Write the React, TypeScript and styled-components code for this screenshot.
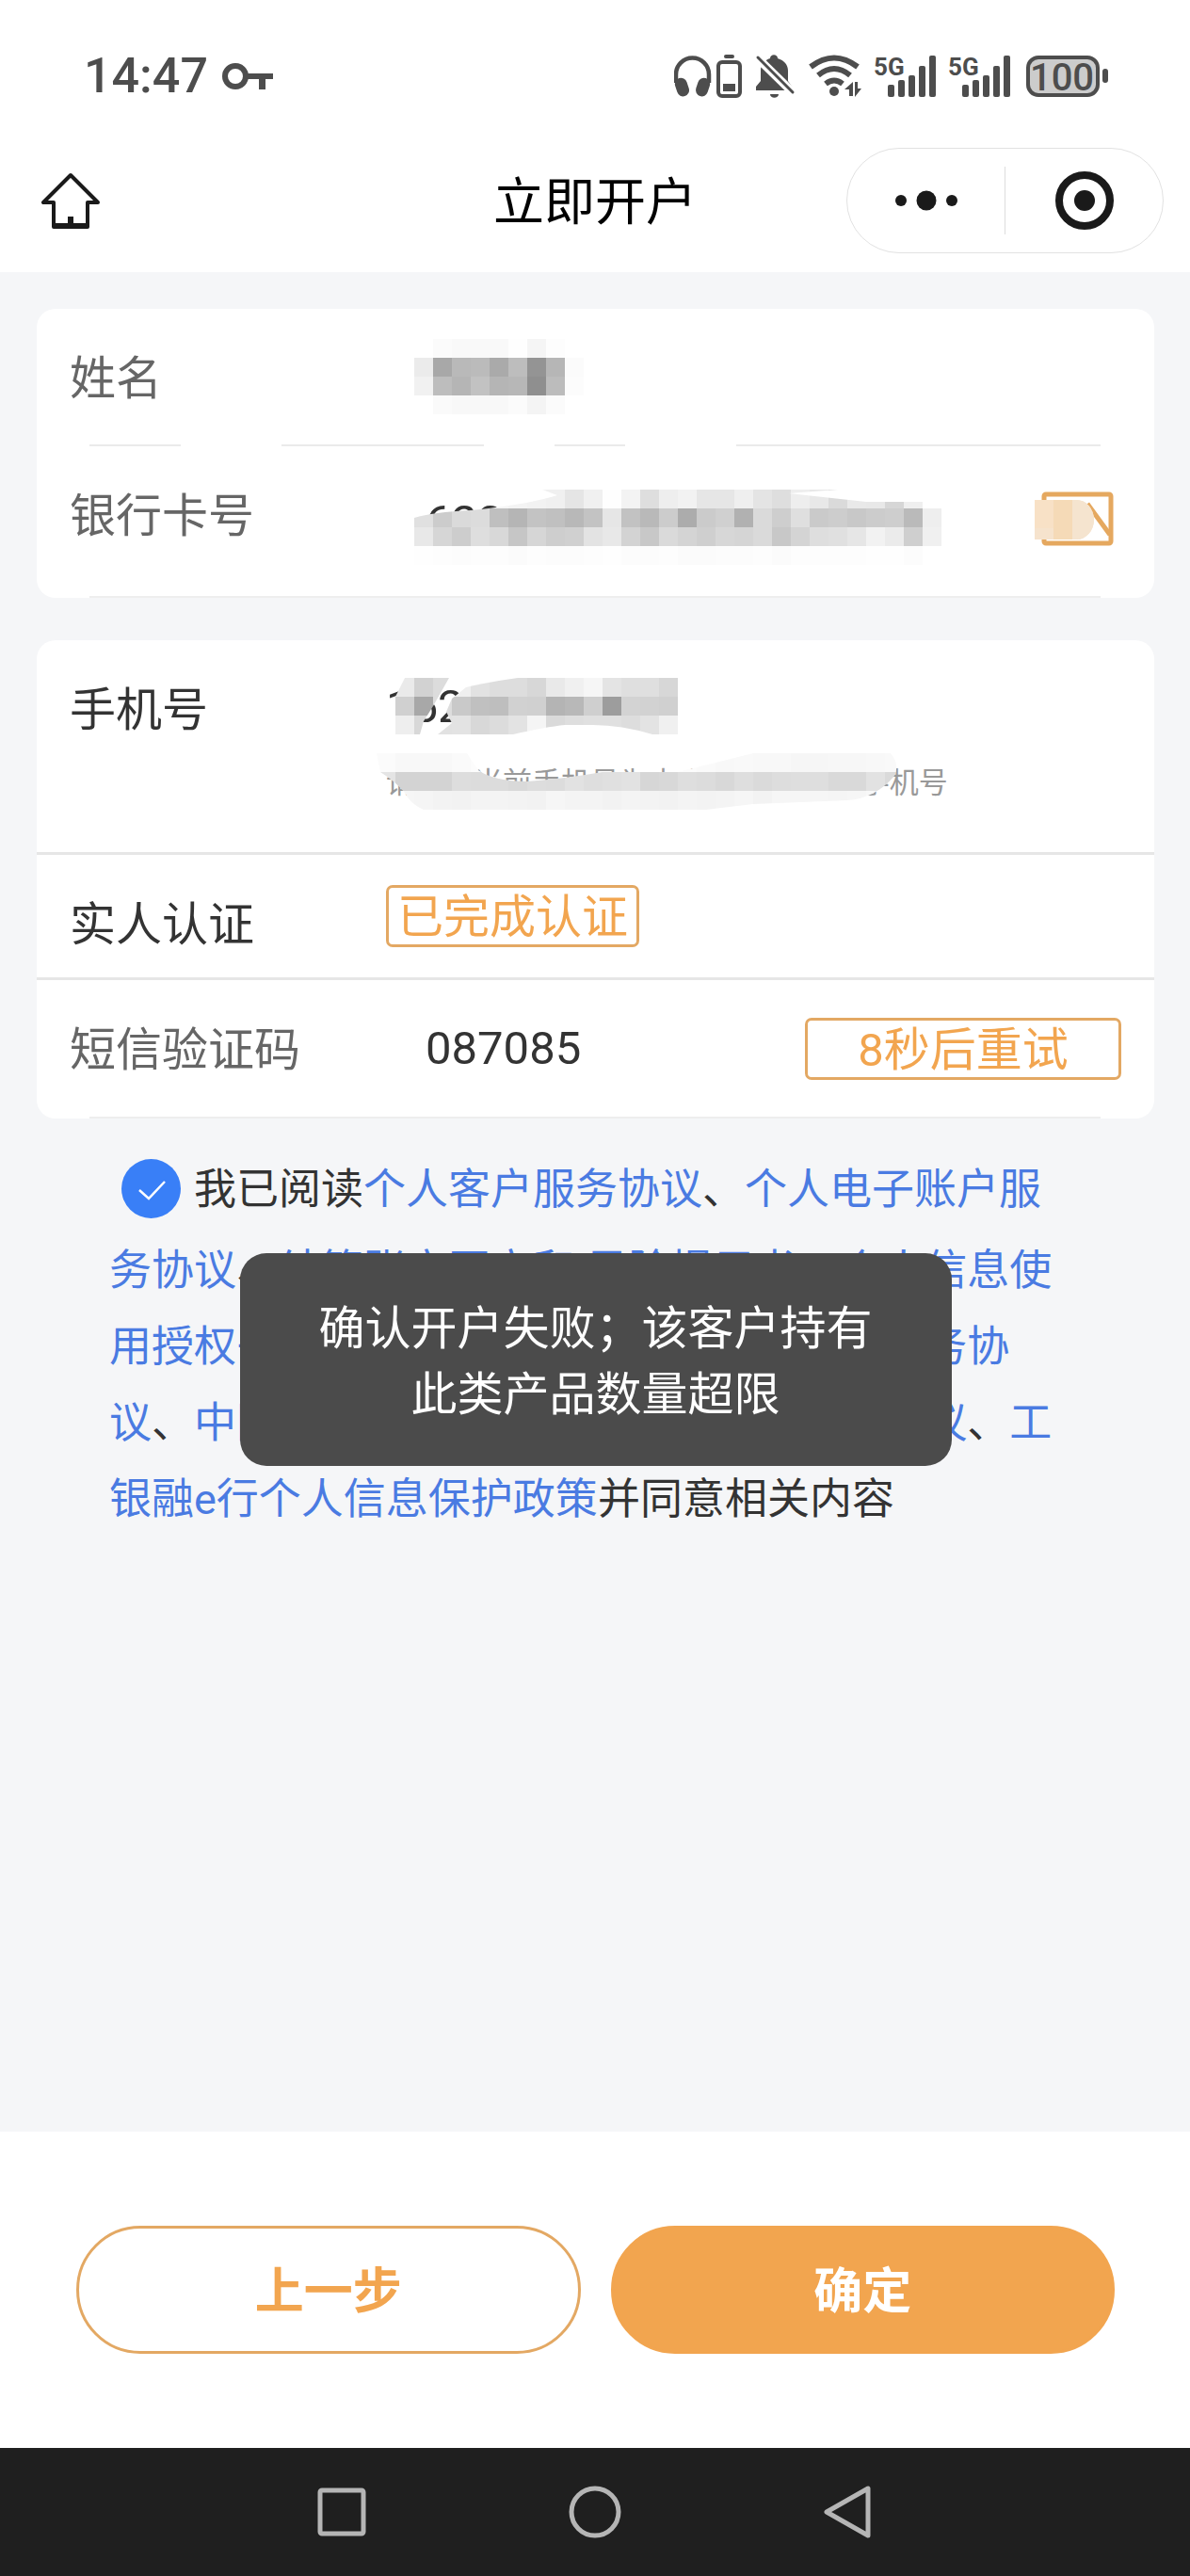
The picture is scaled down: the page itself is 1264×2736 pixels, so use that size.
import React, { useId } from "react";
import styled, { createGlobalStyle, css } from "styled-components";

const orange = "#f2a54f";
const ink = "#333333";
const statusInk = "#4d4d4d";

const GlobalStyle = createGlobalStyle`
  *, *::before, *::after { box-sizing: border-box; }
  body {
    margin: 0;
    background: #ffffff;
    color: ${ink};
    font-family: Roboto, "Noto Sans CJK SC", sans-serif;
  }
  button, input { font: inherit; color: inherit; }
`;

const Page = styled.div`
  display: flex;
  flex-direction: column;
  min-height: 100vh;
`;

/* ---------- status bar ---------- */

const StatusBar = styled.div`
  display: flex;
  align-items: center;
  justify-content: space-between;
  height: 157px;
  padding: 5px 87px 0 89px;
  color: ${statusInk};
`;

const StatusGroup = styled.div<{ $gap: number }>`
  display: flex;
  align-items: center;
  gap: ${(p) => p.$gap}px;
`;

const Clock = styled.time`
  font-size: 52px;
  line-height: 60px;
  font-weight: 500;
`;

const BadgeText = styled.text`
  font-family: Roboto, sans-serif;
  fill: ${statusInk};
`;

const KeyIcon = () => (
  <svg width="56" height="48" viewBox="234 57 56 48" aria-hidden="true">
    <circle cx="249" cy="81" r="11" fill="none" stroke={statusInk} strokeWidth="6" />
    <path d="M262 78h27v6h-8v11h-7V84h-12z" fill={statusInk} />
  </svg>
);

const HeadphonesIcon = () => (
  <svg width="73" height="48" viewBox="716 57 73 48" aria-hidden="true">
    <path d="M718 88V79a17.500 17.500 0 0 1 35 0v9" fill="none" stroke={statusInk} strokeWidth="4.500" />
    <rect x="718" y="83" width="13" height="20" rx="6.500" transform="rotate(-18 723 93)" fill={statusInk} />
    <rect x="740" y="83" width="13" height="20" rx="6.500" transform="rotate(18 748 93)" fill={statusInk} />
    <rect x="763" y="66" width="23" height="36" rx="4" fill="none" stroke={statusInk} strokeWidth="4" />
    <rect x="769" y="58" width="11" height="4" rx="2" fill={statusInk} />
    <rect x="768" y="89" width="13" height="8" fill={statusInk} />
  </svg>
);

const MutedBellIcon = () => (
  <svg width="44" height="48" viewBox="802 57 44 48" aria-hidden="true">
    <path
      d="M803 96v-4l5-6V75c0-7 4-11 10-13 0-5 8-5 8 0 7 2 11 7 11 13v11l5 7v3zM818 100h9c0 5-9 5-9 0z"
      fill={statusInk}
    />
    <path d="M803 60l40 39" stroke="#ffffff" strokeWidth="9" />
    <path d="M805 61l37 37" stroke={statusInk} strokeWidth="3" strokeLinecap="round" />
  </svg>
);

const WifiIcon = () => (
  <svg width="56" height="48" viewBox="860 57 56 48" aria-hidden="true">
    <g fill="none" stroke={statusInk} strokeWidth="6">
      <path d="M862 71q25-19 50 0" />
      <path d="M870 80q17-14 34 0" />
      <path d="M878 89q9-7 18 0" />
    </g>
    <circle cx="887" cy="97" r="5" fill={statusInk} />
    <path d="M898 95l9-8v15h-4v-7zM909 87h3v7h4l-7 9z" fill={statusInk} />
  </svg>
);

const SignalIcon = () => (
  <svg width="66" height="64" viewBox="0 49 66 64" aria-hidden="true">
    <BadgeText x="0" y="80" fontSize="26" fontWeight="700">
      5G
    </BadgeText>
    {[90, 85, 80, 70, 59].map((top, i) => (
      <rect key={top} x={15 + i * 11} y={top} width="7" height={103 - top} rx="2" fill={statusInk} />
    ))}
  </svg>
);

const BatteryIcon = () => (
  <svg width="91" height="48" viewBox="1086 57 91 48" role="img" aria-label="电量 100">
    <rect x="1092" y="61" width="74" height="40" rx="11" fill="#cccccc" stroke={statusInk} strokeWidth="4" />
    <rect x="1171" y="73" width="6" height="15" rx="3" fill={statusInk} />
    <BadgeText x="1128" y="96" fontSize="40" fontWeight="500" textAnchor="middle">
      100
    </BadgeText>
  </svg>
);

/* ---------- title bar ---------- */

const TitleBar = styled.header`
  display: grid;
  grid-template-columns: 1fr auto 1fr;
  align-items: center;
  height: 112px;
  margin-bottom: 20px;
  padding: 0 28px;
`;

const IconButton = styled.button`
  display: flex;
  align-items: center;
  justify-content: center;
  padding: 0;
  border: 0;
  background: none;
  cursor: pointer;
`;

const HomeButton = styled(IconButton)`
  justify-self: start;
  padding: 0 16px;
`;

const Title = styled.h1`
  margin: 0;
  padding-top: 6px;
  font-size: 54px;
  line-height: 64px;
  font-weight: 400;
  color: #000000;
`;

const Capsule = styled.div`
  display: flex;
  align-items: center;
  justify-self: end;
  width: 337px;
  height: 112px;
  border: 1px solid #e2e2e2;
  border-radius: 56px;
`;

const CapsuleButton = styled(IconButton)`
  flex: 1;
  height: 72px;
  & + & { border-left: 1px solid #dddddd; }
`;

/* ---------- form ---------- */

const Main = styled.main`
  flex: 1;
  padding: 39px 38px 0 39px;
  background: #f5f6f8;
`;

const Form = styled.form`
  display: flex;
  flex-direction: column;
`;

const Card = styled.section`
  margin-bottom: 45px;
  border-radius: 20px;
  background: #ffffff;
`;

const rule = {
  full: css`
    border-bottom: 3px solid #e6e6e6;
  `,
  inset: css`
    &::after {
      content: "";
      position: absolute;
      left: 56px;
      right: 57px;
      bottom: 0;
      height: 2px;
      background: #eeeeee;
    }
  `,
  broken: css`
    &::after {
      content: "";
      position: absolute;
      left: 56px;
      right: 57px;
      bottom: 0;
      height: 2px;
      background: linear-gradient(
        to right,
        #eaeaea 9%, transparent 9% 19%, #eaeaea 19% 39%, transparent 39% 46%,
        #eaeaea 46% 53%, transparent 53% 64%, #eaeaea 64%
      );
    }
  `,
};

const Row = styled.div<{ $height: number; $rule: keyof typeof rule }>`
  position: relative;
  display: flex;
  align-items: flex-start;
  min-height: ${(p) => p.$height}px;
  padding: 0 35px;
  ${(p) => rule[p.$rule]}
`;

const labelStyle = css`
  flex: none;
  width: 336px;
  padding: 42px 0 0;
  font-size: 49px;
  line-height: 66px;
  white-space: nowrap;
`;

const Label = styled.label<{ $soft?: boolean }>`
  ${labelStyle}
  color: ${(p) => (p.$soft ? "#666666" : ink)};
`;

const LabelText = styled.span`
  ${labelStyle}
`;

const Field = styled.div<{ $indent?: boolean; $top: number }>`
  position: relative;
  flex: 1;
  min-width: 0;
  padding: ${(p) => p.$top}px 0 0 ${(p) => (p.$indent ? 42 : 0)}px;
`;

const TextInput = styled.input`
  display: block;
  width: 100%;
  height: 66px;
  padding: 0;
  border: 0;
  outline: 0;
  background: none;
  font-size: 49px;
  line-height: 66px;
`;

const Hint = styled.p`
  margin: 28px 0 0;
  font-size: 31px;
  line-height: 40px;
  color: #999999;
  white-space: nowrap;
`;

const outlined = css`
  height: 66px;
  border: 3px solid #e3a863;
  border-radius: 7px;
  background: none;
  font-size: 49px;
  line-height: 64px;
  color: ${orange};
`;

const VerifiedTag = styled.span`
  ${outlined}
  display: inline-block;
  padding: 0 9px;
`;

const RetryButton = styled.button`
  ${outlined}
  flex: none;
  width: 336px;
  margin-top: 40px;
  padding: 0;
`;

const CardScanButton = styled(IconButton)`
  flex: none;
  margin: 46px 8px 0 0;
`;

const MosaicSvg = styled.svg<{ $left: number; $top: number }>`
  position: absolute;
  left: ${(p) => p.$left}px;
  top: ${(p) => p.$top}px;
  pointer-events: none;
`;

/* Grey tiles that hide a private value. Each row is a list of two-digit grey levels, ".." is clear. */
const Mosaic = ({ rows, shape, left, top }: { rows: string[]; shape?: string; left: number; top: number }) => {
  const id = useId();
  const grid = rows.map((r) => r.split(" "));
  const width = Math.max(...grid.map((r) => r.length)) * 20;
  const height = rows.length * 20;
  return (
    <MosaicSvg $left={left} $top={top} width={width} height={height} viewBox={`0 0 ${width} ${height}`} aria-hidden="true">
      <clipPath id={id}>
        <path d={shape ?? `M0 0H${width}V${height}H0z`} />
      </clipPath>
      <g clipPath={`url(#${id})`} shapeRendering="crispEdges">
        {grid.map((row, y) =>
          row.map((g, x) =>
            g === ".." ? null : <rect key={`${x}-${y}`} x={x * 20} y={y * 20} width="20" height="20" fill={`#${g}${g}${g}`} />
          )
        )}
      </g>
    </MosaicSvg>
  );
};

const nameTiles = [
  ".. fb f9 f9 f9 fe f5 fd",
  "eb a8 b9 bb aa bd 94 b6 fb",
  "f1 bd b5 c2 b5 b7 8f bc fc",
  ".. fa f8 f8 f8 fb f4 fb",
];

const cardTiles = [
  "fe fe fe fe f6 f4 f2 f0 e5 f0 fe f3 de ee f2 e6 e6 ef e4 de ee e8 da e9 e8 d6 ef",
  "e0 cc da dc bf b5 c3 c0 b8 c3 e6 c2 b9 cc ac cb d0 b1 da ce df ca cd c8 cc ce ba ee",
  "e8 d6 cd de d8 c6 d6 ce d0 e3 e8 d3 c8 da d4 cf d7 d5 da c8 d4 de e0 e6 f2 eb cf f0",
  "fe fd fc fd fd fb fd fc fc fd fe fc fc fd fb fb fc fc fd fb fd fd fd fd fe fe fc",
];

const phoneTiles = [
  "ea d2 dc ef e2 dd dd d7 e9 f0 f6 e4 df df d7",
  "d0 a8 dd c9 c0 be d1 d0 b4 b8 cf 9d d3 d2 d0",
  "ee d8 e2 e3 d8 dc e3 f5 da de e0 e0 dd e3 f0",
];

const hintTiles = [
  "fb f8 f8 f8 fa fc fd fe fe fe fe fe fd fb fe fa fc fa f8 f9 f8 f8 f6 f6 f7 f7 f8 f9",
  "e4 d3 d3 d3 dd dc dc d9 dd dc e2 de e0 e2 d6 d8 de dc d8 de da dd de de d9 d9 e2 da",
  "fb f6 f5 f3 f2 f4 f4 f3 f2 f6 f4 f4 f2 f4 f3 f2 f4 f3 f4 f6 f3 f6 f6 f6 f5 f6 f8 f8",
];

/* ---------- agreement ---------- */

const Agreement = styled.section`
  position: relative;
  margin-top: -10px;
  padding: 0 106px 0 77px;
`;

const AgreementText = styled.p`
  margin: 0;
  font-size: 45px;
  line-height: 81px;
  a { color: #4a7be2; text-decoration: none; }
`;

const AgreeBox = styled.input`
  appearance: none;
  width: 63px;
  height: 63px;
  margin: 6px 14px 15px 13px;
  border-radius: 50%;
  vertical-align: middle;
  background-color: #397ff7;
  background-image: url("data:image/svg+xml,%3Csvg xmlns='http://www.w3.org/2000/svg' viewBox='0 0 63 63'%3E%3Cpath d='M19 33l10 9 17-18' fill='none' stroke='white' stroke-width='2.5'/%3E%3C/svg%3E");
`;

const Toast = styled.div`
  position: absolute;
  top: 108px;
  left: 50%;
  width: 756px;
  padding: 46px 80px 40px;
  transform: translateX(-50%);
  border-radius: 28px;
  background: #4b4b4b;
  color: #ffffff;
  font-size: 49px;
  line-height: 70px;
  text-align: center;
`;

/* ---------- footer ---------- */

const Actions = styled.footer`
  display: flex;
  gap: 32px;
  padding: 100px 80px 100px 81px;
  background: #ffffff;
`;

const ActionButton = styled.button<{ $primary?: boolean }>`
  flex: 1;
  height: 136px;
  padding: 6px 0 0;
  border: 3px solid ${(p) => (p.$primary ? orange : "#e3a863")};
  border-radius: 68px;
  background: ${(p) => (p.$primary ? orange : "#ffffff")};
  color: ${(p) => (p.$primary ? "#ffffff" : orange)};
  font-size: 52px;
  font-weight: 700;
  line-height: 64px;
`;

const SystemNav = styled.nav`
  display: flex;
  align-items: center;
  justify-content: center;
  gap: 213px;
  height: 136px;
  background: #1f1f1f;
`;

const NavIcon = ({ children }: { children: React.ReactNode }) => (
  <svg width="56" height="56" viewBox="0 0 56 56" fill="none" stroke="#b5b5b5" strokeWidth="5" strokeLinejoin="round" aria-hidden="true">
    {children}
  </svg>
);

export default function App() {
  return (
    <Page>
      <GlobalStyle />
      <StatusBar>
        <StatusGroup $gap={14}>
          <Clock>14:47</Clock>
          <KeyIcon />
        </StatusGroup>
        <StatusGroup $gap={13}>
          <HeadphonesIcon />
          <MutedBellIcon />
          <WifiIcon />
          <SignalIcon />
          <SignalIcon />
          <BatteryIcon />
        </StatusGroup>
      </StatusBar>

      <TitleBar>
        <HomeButton type="button" aria-label="首页">
          <svg width="62" height="62" viewBox="0 0 62 62" fill="none" stroke="#1a1a1a" strokeWidth="4" strokeLinejoin="round" aria-hidden="true">
            <path d="M31 4L2 33h11v26h36V33h11z" />
            <path d="M31 48v11M14 58h34" strokeWidth="6" />
          </svg>
        </HomeButton>
        <Title>立即开户</Title>
        <Capsule>
          <CapsuleButton type="button" aria-label="更多">
            <svg width="66" height="24" viewBox="0 0 66 24" fill="#1a1a1a" aria-hidden="true">
              <circle cx="6" cy="12" r="6" />
              <circle cx="33" cy="12" r="10.500" />
              <circle cx="60" cy="12" r="6" />
            </svg>
          </CapsuleButton>
          <CapsuleButton type="button" aria-label="关闭">
            <svg width="62" height="62" viewBox="0 0 62 62" aria-hidden="true">
              <circle cx="31" cy="31" r="27" fill="none" stroke="#1a1a1a" strokeWidth="8" />
              <circle cx="31" cy="31" r="11" fill="#1a1a1a" />
            </svg>
          </CapsuleButton>
        </Capsule>
      </TitleBar>

      <Main>
        <Form onSubmit={(e) => e.preventDefault()}>
          <Card>
            <Row $height={146} $rule="broken">
              <Label $soft htmlFor="name">姓名</Label>
              <Field $indent $top={40}>
                <TextInput id="name" type="text" />
                <Mosaic rows={nameTiles} left={30} top={32} />
              </Field>
            </Row>
            <Row $height={161} $rule="inset">
              <Label $soft htmlFor="card">银行卡号</Label>
              <Field $indent $top={48}>
                <TextInput id="card" type="text" defaultValue="622" />
                <Mosaic
                  rows={cardTiles}
                  left={30}
                  top={46}
                  shape="M0 30Q20 24 60 22Q120 16 152 6L136 0H450L398 4L480 13L540 13V20H560V80H0z"
                />
              </Field>
              <CardScanButton type="button" aria-label="扫描银行卡">
                <svg width="84" height="60" viewBox="0 0 84 60" aria-hidden="true">
                  <rect x="10" y="5" width="71" height="52" rx="2" fill="none" stroke="#e5a85f" strokeWidth="5" />
                  <path d="M56 15l24 33" stroke="#e5a85f" strokeWidth="5" />
                  <path d="M0 11h44a19 21 0 0 1 0 42H0z" fill="#f8e1c6" />
                  <path d="M20 11h20v42H20z" fill="#f5dab7" />
                  <path d="M40 11h5a18 21 0 0 1 0 42h-5z" fill="#f5e4cf" />
                  <path d="M0 41h20v12H0z" fill="#f6e3cd" />
                </svg>
              </CardScanButton>
            </Row>
          </Card>

          <Card>
            <Row $height={228} $rule="full">
              <Label htmlFor="phone">手机号</Label>
              <Field $top={38}>
                <TextInput id="phone" type="tel" defaultValue="152" />
                <Hint>请确保当前手机号为本人在 银行预留手机号</Hint>
                <Mosaic
                  rows={phoneTiles}
                  left={10}
                  top={40}
                  shape="M10 0H57L40 30L30 46L26 60H0V20zM75 10Q100 4 130 0H300V60H273Q240 50 210 50H180Q160 52 125 60H45L60 48L54 36L60 22z"
                />
                <Mosaic
                  rows={hintTiles}
                  left={-10}
                  top={120}
                  shape="M0 0H96L108 18Q125 30 160 30Q200 27 240 20H320L400 0H546Q556 12 550 24Q530 48 500 50L400 54L350 60H50Q36 54 30 42Q20 30 4 20z"
                />
              </Field>
            </Row>
            <Row $height={133} $rule="full">
              <LabelText>实人认证</LabelText>
              <Field $top={32}>
                <VerifiedTag>已完成认证</VerifiedTag>
              </Field>
            </Row>
            <Row $height={147} $rule="inset">
              <Label $soft htmlFor="code">短信验证码</Label>
              <Field $indent $top={40}>
                <TextInput id="code" type="text" inputMode="numeric" defaultValue="087085" />
              </Field>
              <RetryButton type="button">8秒后重试</RetryButton>
            </Row>
          </Card>

          <Agreement>
            <AgreementText>
              <AgreeBox id="agree" type="checkbox" defaultChecked />
              <label htmlFor="agree">我已阅读</label>
              <a href="#client">个人客户服务协议</a>、<a href="#account">个人电子账户服务协议</a>、
              <a href="#risk">结算账户开立和 风险提示书</a>、<a href="#info">个人信息使用授权书</a>、
              <a href="#pension">中国工商银行 个人养老金账户服务协议</a>、<a href="#ebank">中国工商银行 电子银行个人客户服务协议</a>、<a href="#privacy">工银融e行个人信息保护政策</a>
              <label htmlFor="agree">并同意相关内容</label>
            </AgreementText>
            <Toast role="alert">确认开户失败；该客户持有此类产品数量超限</Toast>
          </Agreement>
        </Form>
      </Main>

      <Actions>
        <ActionButton type="button">上一步</ActionButton>
        <ActionButton type="button" $primary>确定</ActionButton>
      </Actions>

      <SystemNav aria-label="系统导航">
        <IconButton type="button" aria-label="最近任务">
          <NavIcon><rect x="5" y="5" width="46" height="46" rx="2" /></NavIcon>
        </IconButton>
        <IconButton type="button" aria-label="主屏幕">
          <NavIcon><circle cx="28" cy="28" r="25" /></NavIcon>
        </IconButton>
        <IconButton type="button" aria-label="返回">
          <NavIcon><path d="M49 3v50L5 28z" /></NavIcon>
        </IconButton>
      </SystemNav>
    </Page>
  );
}
